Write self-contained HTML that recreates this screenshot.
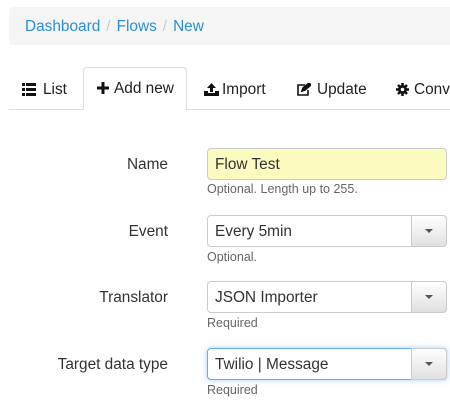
<!DOCTYPE html><html><head><style>
body{margin:0;width:450px;height:405px;overflow:hidden;font-family:"Liberation Sans",sans-serif;background:#fff;color:#333;font-size:15px}
.bc{position:absolute;left:9px;top:7px;width:460px;height:38px;background:#f5f5f5;border-radius:4px;line-height:40px;padding-left:16px;box-sizing:border-box;font-size:15.4px}
.bc a{color:#2a8fd6}.bc s{color:#ccc;text-decoration:none;margin:0 6px}
.tabs{position:absolute;left:9px;top:109px;width:460px;border-top:1px solid #ddd}
.tab{position:absolute;top:69px;height:41px;line-height:41px;font-size:15.4px;color:#222}
.tab svg{position:absolute;top:14px}
.act{left:83px;width:104px;border:1px solid #ddd;border-bottom:none;border-radius:4px 4px 0 0;background:#fff;top:67px;height:43px;box-sizing:border-box}
.lbl{position:absolute;right:282px;font-size:15.4px;color:#333}
.in{position:absolute;left:207px;width:240px;height:32px;border:1px solid #ccc;border-radius:4px;box-sizing:border-box;padding-left:7px;line-height:32px;font-size:15.4px;color:#333;background:#fff}
.sel .btn{position:absolute;right:-1px;top:-1px;width:36px;height:32px;border:1px solid #ccc;border-radius:0 4px 4px 0;box-sizing:border-box;background:linear-gradient(#fff,#e0e0e0)}
.sel .btn:after{content:"";position:absolute;left:13px;top:13px;border:4px solid transparent;border-top:4px solid #555;border-bottom:0}
.help{position:absolute;left:207px;font-size:12.5px;color:#666}
</style></head><body>
<div class="bc"><a>Dashboard</a><s>/</s><a>Flows</a><s>/</s><a>New</a></div>
<div class="tabs"></div>
<div class="tab" style="left:22px;padding-left:21px"><svg style="left:0" width="14" height="13" viewBox="0 0 14 13" fill="#111"><rect x="0" y="0" width="3" height="3"/><rect x="4" y="0" width="10" height="3"/><rect x="0" y="5" width="3" height="3"/><rect x="4" y="5" width="10" height="3"/><rect x="0" y="10" width="3" height="3"/><rect x="4" y="10" width="10" height="3"/></svg>List</div>
<div class="tab act"><svg style="left:13px" width="12" height="12" viewBox="0 0 12 12" fill="#111"><rect x="4.5" y="0" width="3" height="12"/><rect x="0" y="4.5" width="12" height="3"/></svg><span style="position:absolute;left:30px">Add new</span></div>
<div class="tab" style="left:204px;padding-left:18px"><svg style="left:0" width="15" height="13" viewBox="0 0 15 13" fill="#111"><path d="M7.5 0L12 5H9v4H6V5H3z"/><path d="M0 8h4v2h7V8h4v5H0z"/></svg>Import</div>
<div class="tab" style="left:297px;padding-left:20px"><svg style="left:0" width="14" height="13" viewBox="0 0 14 13" fill="none" stroke="#111" stroke-width="1.6"><path d="M8 2H1v10h10V7"/><path d="M5 8l1-3 6-5 2 2-6 5z" fill="#111"/></svg>Update</div>
<div class="tab" style="left:396px;padding-left:18px"><svg style="left:0" width="13" height="13" viewBox="0 0 13 13"><circle cx="6.5" cy="6.5" r="4.5" fill="#111"/><g stroke="#111" stroke-width="2.5"><path d="M6.5 0v13M0 6.5h13M2 2l9 9M11 2l-9 9"/></g><circle cx="6.5" cy="6.5" r="1.8" fill="#fff"/></svg>Conv</div>
<div class="lbl" style="top:156px">Name</div>
<div class="in" style="top:148px;background:#fbfbc0">Flow Test</div>
<div class="help" style="top:182px">Optional. Length up to 255.</div>
<div class="lbl" style="top:223px">Event</div>
<div class="in sel" style="top:215px">Every 5min<div class="btn"></div></div>
<div class="help" style="top:250px">Optional.</div>
<div class="lbl" style="top:289px">Translator</div>
<div class="in sel" style="top:281px">JSON Importer<div class="btn"></div></div>
<div class="help" style="top:316px">Required</div>
<div class="lbl" style="top:356px">Target data type</div>
<div class="in sel" style="top:348px;border-color:#66afe9;box-shadow:0 0 6px rgba(102,175,233,.6)">Twilio | Message<div class="btn"></div></div>
<div class="help" style="top:383px">Required</div>
</body></html>
